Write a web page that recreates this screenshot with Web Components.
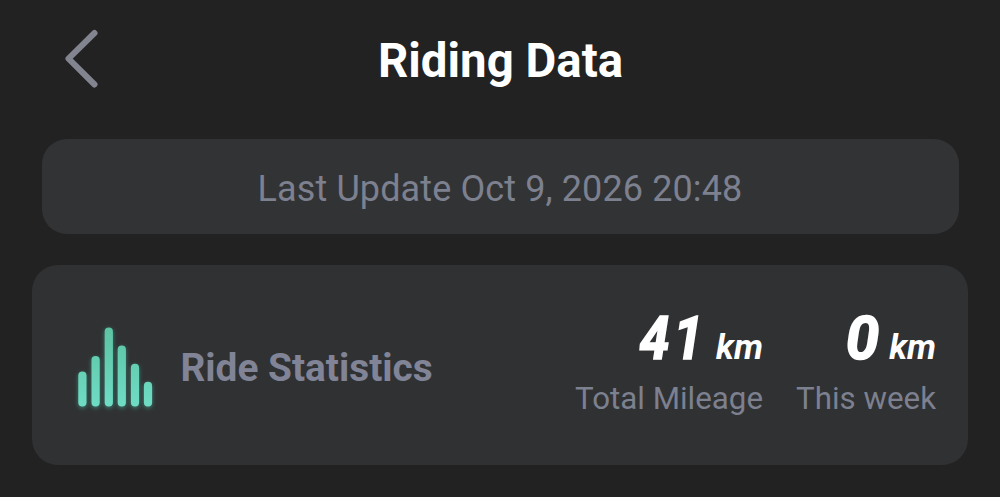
<!DOCTYPE html>
<html lang="en">
<head>
<meta charset="utf-8">
<title>Riding Data</title>
<style>
  body {
    margin: 0;
    background: #222222;
    font-family: Roboto, "Liberation Sans", sans-serif;
    overflow: hidden;
  }
</style>
</head>
<body>
<riding-page>
  <page-header>Riding Data</page-header>
  <update-banner>Last Update Oct 9, 2026 20:48</update-banner>
  <stats-card label="Ride Statistics">
    <stat-value value="41" unit="km" style="--unit-gap: 9px; --digit-scale: 0.9">Total Mileage</stat-value>
    <stat-value value="0" unit="km">This week</stat-value>
  </stats-card>
</riding-page>

<script>
class RidingPage extends HTMLElement {
  constructor() {
    super();
    this.attachShadow({ mode: "open" }).innerHTML = `
      <style>
        :host {
          display: flex;
          flex-direction: column;
          height: 497px;
          padding: 0 32px;
          box-sizing: border-box;
          color: #7c808f;
        }
      </style>
      <slot></slot>
    `;
  }
}

class PageHeader extends HTMLElement {
  constructor() {
    super();
    this.attachShadow({ mode: "open" }).innerHTML = `
      <style>
        :host {
          display: grid;
          grid-template-columns: 100px 1fr 100px;
          align-items: center;
          height: 120px;
          margin-bottom: 18.5px;
        }

        svg {
          display: block;
          margin: 0 0 4px 28px;
        }

        h1 {
          margin: 2px 0 0 1px;
          color: #fff;
          font-size: 47.4px;
          line-height: 56px;
          font-weight: 700;
          text-align: center;
          white-space: nowrap;
        }
      </style>
      <svg width="44" height="64" viewBox="0 0 44 64" fill="none" stroke="#82848f" stroke-width="6" stroke-linecap="round" stroke-linejoin="round">
        <path d="M34.5 7 L8.5 32.7 L34.5 58.5"/>
      </svg>
      <h1><slot></slot></h1>
    `;
  }
}

class UpdateBanner extends HTMLElement {
  constructor() {
    super();
    this.attachShadow({ mode: "open" }).innerHTML = `
      <style>
        :host {
          display: flex;
          align-items: center;
          justify-content: center;
          height: 95.5px;
          margin: 0 9.5px 31px;
          padding-top: 5px;
          box-sizing: border-box;
          border-radius: 25px;
          background: #323335;
          font-size: 36px;
          letter-spacing: 0.11px;
          white-space: nowrap;
        }
      </style>
      <slot></slot>
    `;
  }
}

class StatsCard extends HTMLElement {
  constructor() {
    super();
    this.attachShadow({ mode: "open" });
  }

  connectedCallback() {
    this.shadowRoot.innerHTML = `
      <style>
        :host {
          display: flex;
          align-items: center;
          height: 200px;
          padding: 0 32px 0 40px;
          box-sizing: border-box;
          border-radius: 26px;
          background: #303133;
        }

        svg {
          flex: none;
          display: block;
        }

        h2 {
          margin: 6px 0 0 18.5px;
          color: #808496;
          font-size: 38.8px;
          line-height: 46px;
          font-weight: 700;
          white-space: nowrap;
        }

        .values {
          display: flex;
          gap: 33px;
          margin-left: auto;
        }
      </style>
      <svg width="90" height="100" viewBox="0 0 90 100">
        <defs>
          <linearGradient id="bar" gradientUnits="userSpaceOnUse" x1="0" y1="12" x2="0" y2="92">
            <stop offset="0" stop-color="#5cc3a2"/>
            <stop offset="1" stop-color="#6fdcc5"/>
          </linearGradient>
          <filter id="glow" x="-20%" y="-20%" width="140%" height="140%">
            <feDropShadow dx="0" dy="1.5" stdDeviation="2" flood-color="#40b89c" flood-opacity="0.6"/>
          </filter>
        </defs>
        <g fill="url(#bar)" filter="url(#glow)">
          <rect x="6.3" y="56.5" width="8.2" height="35" rx="4.1"/>
          <rect x="19.5" y="41" width="8.2" height="50.5" rx="4.1"/>
          <rect x="32.7" y="12.5" width="8.2" height="79" rx="4.1"/>
          <rect x="45.7" y="30.5" width="8.2" height="61" rx="4.1"/>
          <rect x="58.9" y="48.8" width="8.2" height="42.7" rx="4.1"/>
          <rect x="71.9" y="66.8" width="8.2" height="24.7" rx="4.1"/>
        </g>
      </svg>
      <h2>${this.getAttribute("label")}</h2>
      <div class="values"><slot></slot></div>
    `;
  }
}

class StatValue extends HTMLElement {
  constructor() {
    super();
    this.attachShadow({ mode: "open" });
  }

  connectedCallback() {
    this.shadowRoot.innerHTML = `
      <style>
        :host {
          display: block;
          text-align: right;
          white-space: nowrap;
        }

        .reading {
          display: flex;
          align-items: baseline;
          justify-content: flex-end;
          height: 68px;
          margin: -9px 0 9px;
          color: #fff;
          font-style: italic;
          font-weight: 700;
        }

        /* thickened digits, close to a DIN numeral */
        .number {
          font-size: 60px;
          line-height: 72px;
          font-weight: 700;
          letter-spacing: 4px;
          -webkit-text-stroke: 1.6px #fff;
          transform: scaleX(var(--digit-scale, 1));
          transform-origin: right;
        }

        .unit {
          margin: 0 0 0 var(--unit-gap, 6px);
          font-size: 34.5px;
        }

        .label {
          font-size: 31.3px;
          line-height: 38px;
        }
      </style>
      <div class="reading">
        <span class="number">${this.getAttribute("value")}</span>
        <span class="unit">${this.getAttribute("unit")}</span>
      </div>
      <div class="label"><slot></slot></div>
    `;
  }
}

customElements.define("riding-page", RidingPage);
customElements.define("page-header", PageHeader);
customElements.define("update-banner", UpdateBanner);
customElements.define("stats-card", StatsCard);
customElements.define("stat-value", StatValue);
</script>
</body>
</html>
